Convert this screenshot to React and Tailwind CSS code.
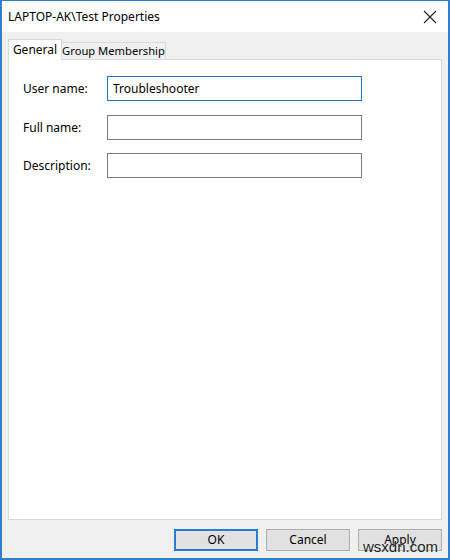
import React from "react";

const font = { fontFamily: '"Noto Sans", "Segoe UI", sans-serif' };

function Field({ label, value, focused, className = "" }) {
  return (
    <div className={`flex items-center ${className}`}>
      <div className="w-[84px] text-[12px] text-black">{label}</div>
      <div
        className={`flex h-[25px] w-[255px] items-center border bg-white px-[5px] text-[12px] text-black ${
          focused ? "border-[#1a73c5]" : "border-[#7a7a7a]"
        }`}
      >
        {value}
      </div>
    </div>
  );
}

function Button({ children, primary }) {
  return (
    <button
      className={`flex h-[22px] w-[84px] items-center justify-center bg-[#e1e1e1] text-[12px] text-black ${
        primary ? "border-2 border-[#2a7ad0]" : "border border-[#adadad]"
      }`}
    >
      {children}
    </button>
  );
}

export default function App() {
  return (
    <div
      className="relative flex h-[560px] w-[450px] flex-col border-t border-l-2 border-r-2 border-b-2 border-[#2f80cc] bg-[#f0f0f0]"
      style={font}
    >
      {/* title bar */}
      <div className="flex h-[31px] shrink-0 items-center justify-between bg-white pl-[6px] pr-[10px]">
        <span className="text-[12px] text-black">LAPTOP-AK\Test Properties</span>
        <svg width="14" height="14" viewBox="0 0 14 14" className="mr-[1px]">
          <path d="M1 1 L13 13 M13 1 L1 13" stroke="#222" strokeWidth="1.1" fill="none" />
        </svg>
      </div>

      {/* tabs + panel */}
      <div className="flex flex-1 flex-col px-[6px] pt-[7px]">
        <div className="relative z-10 flex items-end">
          <div className="-mb-px flex h-[21px] w-[54px] items-center justify-center whitespace-nowrap border border-b-0 border-[#d9d9d9] bg-white text-[12px] text-black">
            General
          </div>
          <div className="flex h-[17px] w-[104px] items-center justify-center whitespace-nowrap border border-l-0 border-b-0 border-[#d9d9d9] bg-[#f0f0f0] text-[11.2px] text-black">
            Group Membership
          </div>
        </div>
        <div className="flex h-[461px] flex-col border border-[#d9d9d9] bg-white pl-[14px] pt-[16px]">
          <Field label="User name:" value="Troubleshooter" focused />
          <Field label="Full name:" className="mt-[14px]" />
          <Field label="Description:" className="mt-[13px]" />
        </div>

        {/* dialog buttons */}
        <div className="mt-[9px] flex justify-end gap-[8px]">
          <Button primary>OK</Button>
          <Button>Cancel</Button>
          <Button>Apply</Button>
        </div>
      </div>

      <span
        className="absolute bottom-[2px] right-[10px] text-[15px] leading-[18px] text-[#1a1a1a]"
        style={{ fontFamily: '"Liberation Sans", Arial, sans-serif', textShadow: "0 0 2px #fff" }}
      >
        wsxdn.com
      </span>
    </div>
  );
}
